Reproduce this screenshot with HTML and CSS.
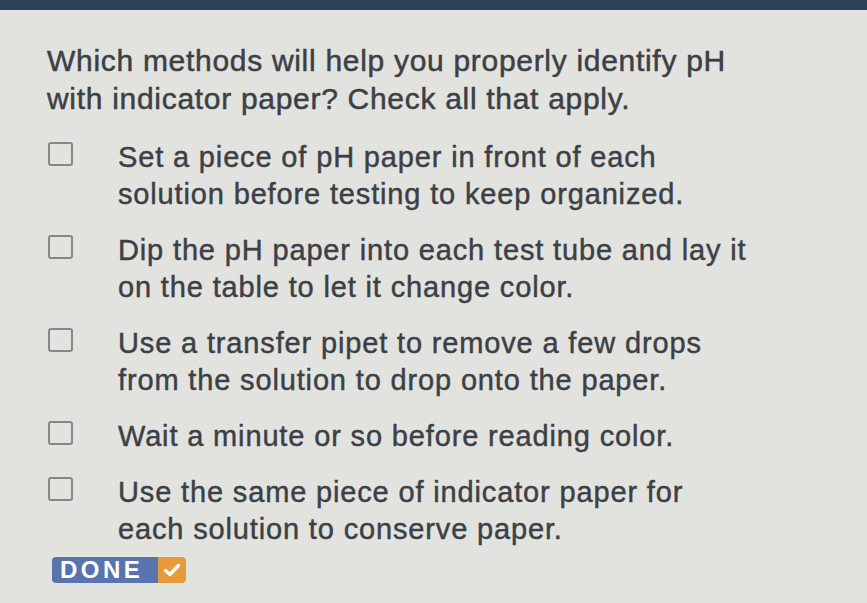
FILE: index.html
```html
<!DOCTYPE html>
<html>
<head>
<meta charset="utf-8">
<link rel="stylesheet" href="styles.css">
</head>
<body>
<div class="topbar"></div>
<main class="content">
  <h1 class="question">Which methods will help you properly identify pH<br>with indicator paper? Check all that apply.</h1>
  <ul class="options">
    <li class="option"><span class="box"></span><span class="label">Set a piece of pH paper in front of each<br>solution before testing to keep organized.</span></li>
    <li class="option"><span class="box"></span><span class="label">Dip the pH paper into each test tube and lay it<br>on the table to let it change color.</span></li>
    <li class="option"><span class="box"></span><span class="label">Use a transfer pipet to remove a few drops<br>from the solution to drop onto the paper.</span></li>
    <li class="option"><span class="box"></span><span class="label">Wait a minute or so before reading color.</span></li>
    <li class="option"><span class="box"></span><span class="label">Use the same piece of indicator paper for<br>each solution to conserve paper.</span></li>
  </ul>
  <button class="done"><span class="done-text">DONE</span><span class="done-check"><svg width="18" height="16" viewBox="0 0 18 16"><path d="M2.5 8.5 L7 12.5 L15.5 3.5" fill="none" stroke="#fff" stroke-width="3.5" stroke-linecap="round" stroke-linejoin="round"/></svg></span></button>
</main>
</body>
</html>
```
FILE: styles.css
```css
html, body {
  margin: 0;
  padding: 0;
  background: #e2e3de;
  width: 867px;
  height: 603px;
  overflow: hidden;
}
body {
  font-family: "Liberation Sans", Arial, sans-serif;
  color: #3c4046;
}
.topbar {
  height: 10px;
  background: #2f3f58;
}
.content {
  padding: 32px 0 0 47px;
}
.question {
  margin: 0;
  font-size: 30px;
  font-weight: normal;
  line-height: 38px;
  letter-spacing: 0.7px;
  -webkit-text-stroke: 0.5px #3c4046;
  white-space: nowrap;
}
.options {
  list-style: none;
  margin: 21px 0 0 1px;
  padding: 0;
  display: flex;
  flex-direction: column;
  gap: 19px;
}
.option {
  display: flex;
  align-items: flex-start;
}
.box {
  flex: none;
  width: 21px;
  height: 20px;
  border: 2px solid #85888b;
  border-radius: 3px;
  margin-top: 3px;
  margin-right: 45px;
}
.label {
  font-size: 29px;
  line-height: 37px;
  letter-spacing: 0.85px;
  -webkit-text-stroke: 0.45px #3c4046;
  white-space: nowrap;
}
.done {
  margin-top: 9px;
  margin-left: 5px;
  display: flex;
  padding: 0;
  border: none;
  border-radius: 4px;
  overflow: hidden;
  height: 26px;
  font-family: "Liberation Sans", Arial, sans-serif;
}
.done-text {
  background: #5873ad;
  color: #fff;
  font-weight: bold;
  font-size: 24px;
  letter-spacing: 3.5px;
  width: 106px;
  padding-left: 8px;
  box-sizing: border-box;
  display: flex;
  align-items: center;
  justify-content: flex-start;
}
.done-check {
  background: #e69a3a;
  width: 28px;
  display: flex;
  align-items: center;
  justify-content: center;
}
```
